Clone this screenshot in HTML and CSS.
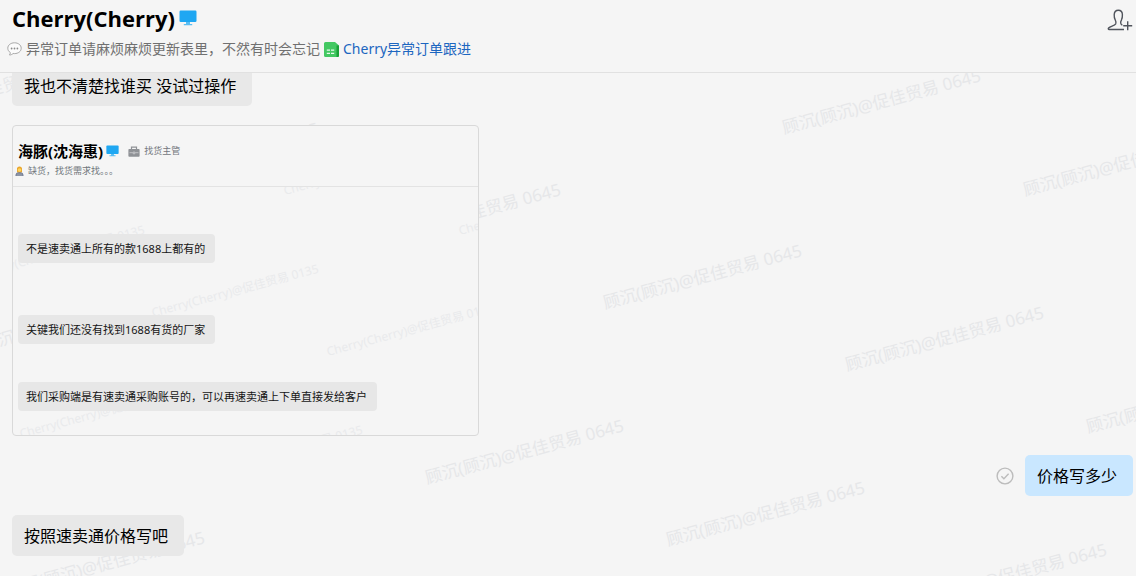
FILE: index.html
```html
<!DOCTYPE html>
<html lang="zh-CN">
  <head>
    <meta charset="UTF-8" />
    <meta name="viewport" content="width=device-width, initial-scale=1.0" />
    <title>Cherry(Cherry)</title>
    <link rel="stylesheet" href="styles.css">
  </head>
  <body>
    <header class="chat-header">
      <div class="chat-info">
        <h1 class="chat-title">
          Cherry(Cherry)
          <svg class="icon-monitor" viewBox="0 0 18 16" aria-hidden="true">
            <rect x="0.5" y="0.5" width="17" height="11.5" rx="1.2" fill="#1fa7f2" />
            <path d="M7 12h4v2h2.2v1.3H4.8V14H7z" fill="#59bdf2" />
          </svg>
        </h1>
        <p class="chat-status">
          <svg class="icon-talk" viewBox="0 0 15 14" aria-hidden="true">
            <path d="M7.5.8c3.8 0 6.7 2.3 6.7 5.4s-2.9 5.4-6.7 5.4l-1.4-.1c-1 .9-2.2 1.5-3.6 1.5.6-.8.8-1.5.8-2.5C1.7 9.5.8 8 .8 6.200.8 3.1 3.7.8 7.5.8z" fill="#fbfbfb" stroke="#a6a6a6" />
            <circle cx="4.6" cy="6.5" r=".9" fill="#8c8c8c" />
            <circle cx="7.5" cy="6.5" r=".9" fill="#8c8c8c" />
            <circle cx="10.4" cy="6.5" r=".9" fill="#8c8c8c" />
          </svg>
          <span>异常订单请麻烦麻烦更新表里，不然有时会忘记</span>
          <svg class="icon-sheet" viewBox="0 0 15 15" aria-hidden="true">
            <path d="M1.5 0H11l4 3.5v10a1.5 1.5 0 0 1-1.5 1.5h-12A1.5 1.5 0 0 1 0 13.5v-12A1.5 1.5 0 0 1 1.5 0z" fill="#43c862" />
            <path d="M12.5 3.5H15v10a1.5 1.5 0 0 1-1.5 1.5h-1z" fill="#1aa238" />
            <path d="M2.800 7.500h3.200v1.300H2.800zM7 7.500h3.200v1.300H7zM2.800 10.800h3.200v1.300H2.800zM7 10.800h3.200v1.300H7z" fill="#e9fbed" />
          </svg>
          <a href="#">Cherry异常订单跟进</a>
        </p>
      </div>
      <button class="add-member" type="button" aria-label="添加成员">
        <svg viewBox="0 0 26 22" aria-hidden="true">
          <path d="M17 20.5H2.2c-.9 0-1.2-.8-.6-1.5 1.8-1.900 5.900-2.200 7.100-4.200.7-1.300.2-2.600-.5-4C7.300 9.200 7.100 7.600 7.200 5.600 7.400 2.800 9 1.200 11.300 1.200s4 1.600 4.100 4.400c.1 2-.1 3.600-.9 5.200-.8 1.400-1.200 2.700-.6 3.900.3.600.8 1.100 1.500 1.500" />
          <path d="M20.7 12.2v9M16.2 16.7h9" />
        </svg>
      </button>
    </header>

    <main class="chat">
      <svg class="watermark" aria-hidden="true">
        <text transform="translate(-119 52) rotate(-15)">顾沉(顾沉)@促佳贸易 0645</text>
        <text transform="translate(122 114) rotate(-15)">顾沉(顾沉)@促佳贸易 0645</text>
        <text transform="translate(364 175) rotate(-15)">顾沉(顾沉)@促佳贸易 0645</text>
        <text transform="translate(605 236) rotate(-15)">顾沉(顾沉)@促佳贸易 0645</text>
        <text transform="translate(847 298) rotate(-15)">顾沉(顾沉)@促佳贸易 0645</text>
        <text transform="translate(1088 360) rotate(-15)">顾沉(顾沉)@促佳贸易 0645</text>
        <text transform="translate(784 61) rotate(-15)">顾沉(顾沉)@促佳贸易 0645</text>
        <text transform="translate(1025 123) rotate(-15)">顾沉(顾沉)@促佳贸易 0645</text>
        <text transform="translate(-55 288) rotate(-15)">顾沉(顾沉)@促佳贸易 0645</text>
        <text transform="translate(427 411) rotate(-15)">顾沉(顾沉)@促佳贸易 0645</text>
        <text transform="translate(668 473) rotate(-15)">顾沉(顾沉)@促佳贸易 0645</text>
        <text transform="translate(910 535) rotate(-15)">顾沉(顾沉)@促佳贸易 0645</text>
        <text transform="translate(8 523) rotate(-15)">顾沉(顾沉)@促佳贸易 0645</text>
      </svg>

      <div class="message">
        <p class="bubble">我也不清楚找谁买 没试过操作</p>
      </div>

      <div class="message">
        <section class="shot">
          <header class="shot-header">
            <div class="shot-top">
              <h2 class="shot-title">海豚(沈海惠)</h2>
              <svg class="icon-monitor-small" viewBox="0 0 18 16" aria-hidden="true">
                <rect x="0.5" y="0.5" width="17" height="11.5" rx="1.2" fill="#1fa7f2" />
                <path d="M7 12h4v2h2.2v1.3H4.8V14H7z" fill="#59bdf2" />
              </svg>
              <span class="shot-role">
                <svg class="icon-case" viewBox="0 0 12 11" aria-hidden="true">
                  <path d="M3.5 3V1.2h5V3" fill="none" stroke="#8f9296" stroke-width="1.2" />
                  <path d="M1.200 3h9.600a.8.8 0 0 1 .8.8V10a.8.8 0 0 1-.8.8H1.200A.8.8 0 0 1 .4 10V3.800a.8.8 0 0 1 .8-.8z" fill="#8f9296" />
                  <path d="M1.500 6.700h3.300M7.200 6.700h3.300M5.200 6h1.600v1.800H5.200z" fill="none" stroke="#d5d6d8" stroke-width=".7" />
                </svg>
                找货主管
              </span>
            </div>
            <p class="shot-status">
              <svg class="icon-person" viewBox="0 0 10 11" aria-hidden="true">
                <path d="M.5 11c0-3 1.500-4.500 4.500-4.500S9.500 8 9.500 11z" fill="#6d7891" />
                <path d="M2.200 7V3.200a2.800 2.800 0 0 1 5.600 0V7z" fill="#e9a52c" />
                <circle cx="5" cy="4.5" r="2" fill="#ffd45c" />
                <path d="M2 8h6l.5 3h-7z" fill="#8d95a5" />
              </svg>
              缺货，找货需求找。。。
            </p>
          </header>
          <div class="shot-body">
            <svg class="watermark watermark-small" aria-hidden="true">
              <text transform="translate(272 8) rotate(-15)">Cherry(Cherry)@促佳贸易 0135</text>
              <text transform="translate(447 48) rotate(-15)">Cherry(Cherry)@促佳贸易 0135</text>
              <text transform="translate(-34 91) rotate(-15)">Cherry(Cherry)@促佳贸易 0135</text>
              <text transform="translate(140 130) rotate(-15)">Cherry(Cherry)@促佳贸易 0135</text>
              <text transform="translate(315 169) rotate(-15)">Cherry(Cherry)@促佳贸易 0135</text>
              <text transform="translate(8 251) rotate(-15)">Cherry(Cherry)@促佳贸易 0135</text>
              <text transform="translate(184 291) rotate(-15)">Cherry(Cherry)@促佳贸易 0135</text>
            </svg>
            <p class="shot-bubble">不是速卖通上所有的款1688上都有的</p>
            <p class="shot-bubble">关键我们还没有找到1688有货的厂家</p>
            <p class="shot-bubble shot-bubble-near">我们采购端是有速卖通采购账号的，可以再速卖通上下单直接发给客户</p>
          </div>
        </section>
      </div>

      <div class="message message-own">
        <svg class="icon-read" viewBox="0 0 18 18" role="img" aria-label="已读">
          <circle cx="9" cy="9" r="7.9" />
          <path d="M5.4 9.2l2.5 2.5 4.7-5" />
        </svg>
        <p class="bubble">价格写多少</p>
      </div>

      <div class="message">
        <p class="bubble">按照速卖通价格写吧</p>
      </div>
    </main>
  </body>
</html>
```
FILE: styles.css
```css
* {
  box-sizing: border-box;
}
body {
  margin: 0;
  display: flex;
  flex-direction: column;
  height: 100vh;
  background: #f5f5f5;
  color: #000;
  font-family: "Noto Sans", "Noto Sans CJK SC", sans-serif;
  overflow: hidden;
}
h1,
h2,
p {
  margin: 0;
}
svg {
  flex: none;
}

/* top bar */
.chat-header {
  display: flex;
  justify-content: space-between;
  align-items: flex-start;
  padding: 3px 3px 12px 7px;
  border-bottom: 1px solid #e1e1e1;
  background: #f5f5f5;
  position: relative;
  z-index: 2;
}
.chat-title {
  display: flex;
  align-items: center;
  gap: 4px;
  padding-left: 5px;
  font-family: "Open Sans", "Noto Sans", sans-serif;
  font-size: 22px;
  line-height: 30px;
  font-weight: 700;
}
.icon-monitor {
  width: 18px;
  height: 16px;
}
.chat-status {
  display: flex;
  align-items: center;
  gap: 4px;
  margin-top: 5px;
  font-size: 14px;
  line-height: 22px;
  color: #707070;
}
.chat-status a {
  color: #1c66c0;
  text-decoration: none;
}
.icon-talk {
  width: 15px;
  height: 14px;
}
.icon-sheet {
  width: 15px;
  height: 15px;
}
.add-member {
  margin-top: 6px;
  padding: 0;
  border: 0;
  background: none;
  cursor: pointer;
}
.add-member svg {
  display: block;
  width: 26px;
  height: 22px;
  fill: none;
  stroke: #50545c;
  stroke-width: 1.4;
}

/* messages */
.chat {
  flex: 1;
  display: flex;
  flex-direction: column;
  gap: 19px;
  padding: 0 3px 0 12px;
  position: relative;
}
.chat .message:first-of-type {
  margin-top: -8px;
}
.message {
  display: flex;
  align-items: center;
  position: relative;
}
.message-own {
  justify-content: flex-end;
  gap: 11px;
}
.bubble {
  padding: 11px 16px 9px 12px;
  border-radius: 5px;
  background: #e8e8e8;
  font-size: 16px;
  line-height: 21px;
}
.message-own .bubble {
  background: #c9e7ff;
}
.icon-read {
  width: 18px;
  height: 18px;
  fill: none;
  stroke: #bcbcbc;
  stroke-width: 1.4;
}
.watermark {
  position: absolute;
  top: 0;
  left: 0;
  width: 100%;
  height: 100%;
  fill: #e6e7e9;
  font-size: 17px;
  pointer-events: none;
}
.watermark-small {
  fill: #e9eaec;
  font-size: 12px;
}

/* picture message */
.shot {
  width: 100%;
  max-width: 467px;
  border: 1px solid #d9d9d9;
  border-radius: 4px;
  background: #f5f5f5;
  overflow: hidden;
}
.shot-header {
  padding: 15px 2px 8px;
  border-bottom: 1px solid #e3e3e3;
}
.shot-top {
  display: flex;
  align-items: center;
  gap: 3px;
  padding-left: 3px;
}
.shot-title {
  font-size: 15px;
  line-height: 20px;
  font-weight: 700;
}
.icon-monitor-small {
  width: 13px;
  height: 12px;
}
.shot-role {
  display: flex;
  align-items: center;
  gap: 4px;
  margin-left: 6px;
  font-size: 9px;
  line-height: 14px;
  color: #73777d;
}
.icon-case {
  width: 12px;
  height: 11px;
}
.shot-status {
  display: flex;
  align-items: center;
  gap: 4px;
  margin-top: 3px;
  font-size: 9px;
  line-height: 14px;
  color: #70757b;
}
.icon-person {
  width: 9px;
  height: 10px;
}
.shot-body {
  display: flex;
  flex-direction: column;
  align-items: flex-start;
  gap: 52px;
  padding: 47px 5px 24px;
  position: relative;
}
.shot-bubble {
  padding: 7px 10px 7px 8px;
  border-radius: 4px;
  background: #e7e7e7;
  font-size: 11px;
  line-height: 15px;
  color: #151515;
  position: relative;
}
.shot-bubble-near {
  margin-top: -14px;
}
```
